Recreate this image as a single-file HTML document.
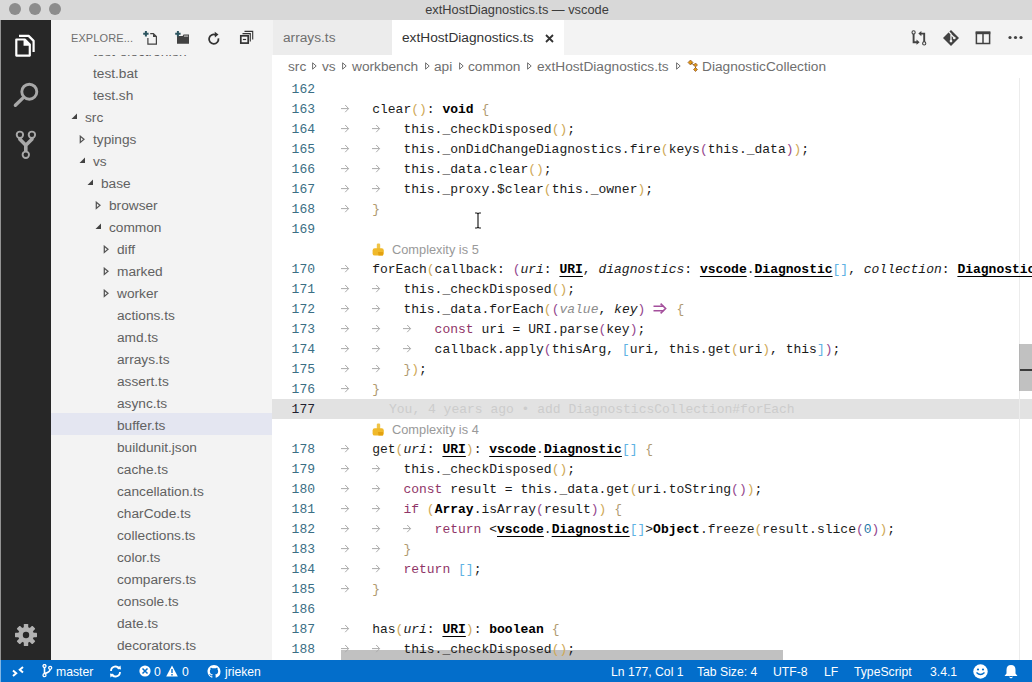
<!DOCTYPE html>
<html><head><meta charset="utf-8">
<style>
*{box-sizing:border-box;margin:0;padding:0}
html,body{width:1032px;height:682px;overflow:hidden;background:#fff;font-family:"Liberation Sans",sans-serif;font-size:13px}
.abs{position:absolute}
#title{left:0;top:0;width:1032px;height:20px;background:#d8d8d8;color:#3c3c3c;text-align:center;line-height:19px;font-size:12.8px;padding-left:2px}
.tl{position:absolute;top:3px;width:12px;height:12px;border-radius:50%;background:#8c8c8c}
#act{left:0;top:20px;width:51px;height:640px;background:#272727}
#side{left:51px;top:20px;width:221px;height:640px;background:#f3f3f3;overflow:hidden}
#sidehdr{left:0;top:0;width:221px;height:35px;background:#f3f3f3;z-index:2}
.row{position:absolute;left:0;width:221px;height:22px;line-height:22px;color:#616161;white-space:nowrap;font-size:13.7px}
.row.sel{background:#e4e6f1}
.tw{position:absolute}
#tabs{left:272px;top:20px;width:760px;height:35px;background:#f3f3f3}
.tab{position:absolute;top:0;height:35px;line-height:36px;white-space:nowrap;font-size:13.7px}
#crumbs{left:272px;top:55px;width:760px;height:23px;background:#fff;color:#6f6f6f;line-height:23px;white-space:nowrap;font-size:13.7px}
#crumbs span{position:absolute;top:0}
#crumbs svg{position:absolute;top:7px}
#editor{left:272px;top:78px;width:760px;height:582px;background:#fff;overflow:hidden}
.ln{position:absolute;left:0;width:43px;text-align:right;color:#3a6e84;font-family:"Liberation Mono",monospace;font-size:13px;height:20px;line-height:20px}
.ln.cur{color:#1f1f2f}
.cl{position:absolute;left:69px;width:700px;height:20px;line-height:20px;white-space:pre;font-family:"Liberation Mono",monospace;font-size:13px;color:#1a1a1a}
.cl>span,.cl>svg{position:absolute;top:0}
.cl>svg{top:-2px}
.ws{color:#b8b8b8}
.g{color:#cfa957}
.p{color:#95488e}
.b{color:#5eb2e3}
.t{color:#b09a70}
.k{color:#8f3568}
.bo{font-weight:bold;color:#000}
.bu{font-weight:bold;color:#000;text-decoration:underline;text-underline-offset:2.5px;text-decoration-thickness:1.4px}
.it{font-style:italic}
.itg{font-style:italic;color:#8c8c8c}
.ar2{display:inline-block;width:15.6px;height:20px;vertical-align:top;position:relative}
.ar2 svg{position:absolute;left:-0.5px;top:-2px}
.num{color:#1f7aa8}
.lens{position:absolute;left:100px;height:20px;line-height:22px;font-size:12.8px;color:#999;white-space:nowrap}
#status{left:0;top:660px;width:1032px;height:22px;background:#036ecb;color:#fff;line-height:22px;white-space:nowrap;font-size:12.2px}
#status span{position:absolute;top:1px}
#status svg{position:absolute}
</style></head>
<body>
<div id="title" class="abs">extHostDiagnostics.ts — vscode
  <div class="tl" style="left:9px"></div><div class="tl" style="left:29px"></div><div class="tl" style="left:49px"></div>
</div>
<div id="act" class="abs">
  <!-- files icon -->
  <svg class="abs" style="left:13px;top:12px" width="24" height="26" viewBox="0 0 24 26">
    <path d="M6 3.9 H15.6 L20.6 8.9 V20" fill="none" stroke="#fff" stroke-width="2.2" stroke-linejoin="round"/>
    <path d="M3.3 7.5 H11.8 L16.8 12.5 V23.6 H3.3 Z" fill="#272727" stroke="#fff" stroke-width="2.2" stroke-linejoin="round"/>
    <path d="M11.3 7.5 V13 H16.8" fill="#fff" stroke="#fff" stroke-width="1.5"/>
  </svg>
  <!-- search -->
  <svg class="abs" style="left:12px;top:60px" width="28" height="28" viewBox="0 0 28 28">
    <circle cx="17.3" cy="11.7" r="7.5" fill="none" stroke="#a8a8a8" stroke-width="2.9"/>
    <path d="M11.6 17.4 L3.4 25.3" stroke="#a8a8a8" stroke-width="3.4" stroke-linecap="round"/>
  </svg>
  <!-- scm -->
  <svg class="abs" style="left:11px;top:108px" width="28" height="32" viewBox="0 0 28 32">
    <path d="M8.9 9 V11.3 L14.8 17.2 V23.5 M20.9 9 V11.3 L14.8 17.2" fill="none" stroke="#a8a8a8" stroke-width="3.6" stroke-linejoin="round"/>
    <circle cx="8.9" cy="6.8" r="3.2" fill="#272727" stroke="#a8a8a8" stroke-width="1.9"/>
    <circle cx="20.9" cy="6.8" r="3.2" fill="#272727" stroke="#a8a8a8" stroke-width="1.9"/>
    <circle cx="14.8" cy="26.8" r="3.2" fill="#272727" stroke="#a8a8a8" stroke-width="1.9"/>
  </svg>
  <!-- gear -->
  <svg class="abs" style="left:13px;top:602px" width="26" height="26" viewBox="-13 -13 26 26">
    <g fill="#b2b2b2">
      <circle r="7.9"/>
      <rect x="-2.2" y="-11" width="4.4" height="22" rx="0.6"/>
      <rect x="-2.2" y="-11" width="4.4" height="22" rx="0.6" transform="rotate(45)"/>
      <rect x="-2.2" y="-11" width="4.4" height="22" rx="0.6" transform="rotate(90)"/>
      <rect x="-2.2" y="-11" width="4.4" height="22" rx="0.6" transform="rotate(135)"/>
    </g>
    <circle r="3.2" fill="#272727"/>
  </svg>
</div>
<div id="side" class="abs">
<div class="row" style="top:19px"><span style="position:absolute;top:2px;left:42px">test-electron.sh</span></div>
<div class="row" style="top:41px"><span style="position:absolute;top:2px;left:42px">test.bat</span></div>
<div class="row" style="top:63px"><span style="position:absolute;top:2px;left:42px">test.sh</span></div>
<div class="row" style="top:85px"><svg class="tw" style="left:20px;top:8px" width="7" height="7"><path d="M6 0.5 L6 6 L0.5 6 Z" fill="#424242"/></svg><span style="position:absolute;top:2px;left:34px">src</span></div>
<div class="row" style="top:107px"><svg class="tw" style="left:28px;top:8px" width="7" height="9"><path d="M1.3 1.2 L5 4.3 L1.3 7.4 Z" fill="none" stroke="#555" stroke-width="1.25"/></svg><span style="position:absolute;top:2px;left:42px">typings</span></div>
<div class="row" style="top:129px"><svg class="tw" style="left:28px;top:8px" width="7" height="7"><path d="M6 0.5 L6 6 L0.5 6 Z" fill="#424242"/></svg><span style="position:absolute;top:2px;left:42px">vs</span></div>
<div class="row" style="top:151px"><svg class="tw" style="left:36px;top:8px" width="7" height="7"><path d="M6 0.5 L6 6 L0.5 6 Z" fill="#424242"/></svg><span style="position:absolute;top:2px;left:50px">base</span></div>
<div class="row" style="top:173px"><svg class="tw" style="left:44px;top:8px" width="7" height="9"><path d="M1.3 1.2 L5 4.3 L1.3 7.4 Z" fill="none" stroke="#555" stroke-width="1.25"/></svg><span style="position:absolute;top:2px;left:58px">browser</span></div>
<div class="row" style="top:195px"><svg class="tw" style="left:44px;top:8px" width="7" height="7"><path d="M6 0.5 L6 6 L0.5 6 Z" fill="#424242"/></svg><span style="position:absolute;top:2px;left:58px">common</span></div>
<div class="row" style="top:217px"><svg class="tw" style="left:52px;top:8px" width="7" height="9"><path d="M1.3 1.2 L5 4.3 L1.3 7.4 Z" fill="none" stroke="#555" stroke-width="1.25"/></svg><span style="position:absolute;top:2px;left:66px">diff</span></div>
<div class="row" style="top:239px"><svg class="tw" style="left:52px;top:8px" width="7" height="9"><path d="M1.3 1.2 L5 4.3 L1.3 7.4 Z" fill="none" stroke="#555" stroke-width="1.25"/></svg><span style="position:absolute;top:2px;left:66px">marked</span></div>
<div class="row" style="top:261px"><svg class="tw" style="left:52px;top:8px" width="7" height="9"><path d="M1.3 1.2 L5 4.3 L1.3 7.4 Z" fill="none" stroke="#555" stroke-width="1.25"/></svg><span style="position:absolute;top:2px;left:66px">worker</span></div>
<div class="row" style="top:283px"><span style="position:absolute;top:2px;left:66px">actions.ts</span></div>
<div class="row" style="top:305px"><span style="position:absolute;top:2px;left:66px">amd.ts</span></div>
<div class="row" style="top:327px"><span style="position:absolute;top:2px;left:66px">arrays.ts</span></div>
<div class="row" style="top:349px"><span style="position:absolute;top:2px;left:66px">assert.ts</span></div>
<div class="row" style="top:371px"><span style="position:absolute;top:2px;left:66px">async.ts</span></div>
<div class="row sel" style="top:393px"><span style="position:absolute;top:2px;left:66px">buffer.ts</span></div>
<div class="row" style="top:415px"><span style="position:absolute;top:2px;left:66px">buildunit.json</span></div>
<div class="row" style="top:437px"><span style="position:absolute;top:2px;left:66px">cache.ts</span></div>
<div class="row" style="top:459px"><span style="position:absolute;top:2px;left:66px">cancellation.ts</span></div>
<div class="row" style="top:481px"><span style="position:absolute;top:2px;left:66px">charCode.ts</span></div>
<div class="row" style="top:503px"><span style="position:absolute;top:2px;left:66px">collections.ts</span></div>
<div class="row" style="top:525px"><span style="position:absolute;top:2px;left:66px">color.ts</span></div>
<div class="row" style="top:547px"><span style="position:absolute;top:2px;left:66px">comparers.ts</span></div>
<div class="row" style="top:569px"><span style="position:absolute;top:2px;left:66px">console.ts</span></div>
<div class="row" style="top:591px"><span style="position:absolute;top:2px;left:66px">date.ts</span></div>
<div class="row" style="top:613px"><span style="position:absolute;top:2px;left:66px">decorators.ts</span></div>
<div class="row" style="top:635px"><span style="position:absolute;top:2px;left:66px">diagnostics.ts</span></div>
  <div id="sidehdr" class="abs">
    <span style="position:absolute;left:20px;top:12px;font-size:11px;letter-spacing:0.1px;color:#6f6f6f">EXPLORE...</span>
    <!-- new file -->
    <svg class="abs" style="left:91px;top:10px" width="16" height="16" viewBox="0 0 16 16">
      <path d="M5.9 8 V14.2 H14.4 V6.6 L11.4 3.6 H8.2" fill="none" stroke="#424242" stroke-width="1.2"/>
      <path d="M11 3.4 V7 H14.6 Z" fill="#424242"/>
      <path d="M3.9 1.1 V6.5 M1.2 3.8 H6.6" stroke="#2d5560" stroke-width="2"/>
    </svg>
    <!-- new folder -->
    <svg class="abs" style="left:123px;top:10px" width="16" height="16" viewBox="0 0 16 16">
      <path d="M3 6 H8.6 L9.6 4.6 H15 V13.7 H3 Z" fill="#424242"/>
      <path d="M10 6.1 H14.2" stroke="#e6e6e6" stroke-width="0.9"/>
      <path d="M3.9 1.1 V6.5 M1.2 3.8 H6.6" stroke="#2d5560" stroke-width="2"/>
    </svg>
    <!-- refresh -->
    <svg class="abs" style="left:155px;top:10px" width="16" height="16" viewBox="0 0 16 16">
      <g transform="translate(0.1,0.8)">
      <path d="M12.3 7.6 A4.7 4.7 0 1 1 9.5 4" fill="none" stroke="#333" stroke-width="1.8"/>
      <path d="M8.6 1 L12.4 3.7 L8.8 6.6 Z" fill="#333"/>
      </g>
    </svg>
    <!-- collapse all -->
    <svg class="abs" style="left:188px;top:10px" width="16" height="16" viewBox="0 0 16 16">
      <path d="M5.5 1.4 H13.7 V9.5" fill="none" stroke="#333" stroke-width="1.1"/>
      <path d="M3.5 3.6 H11.3 V11.5" fill="none" stroke="#333" stroke-width="1.1"/>
      <rect x="1.8" y="5.8" width="7.4" height="7.3" fill="#f3f3f3" stroke="#333" stroke-width="1.7"/>
      <path d="M3.9 9.5 H7.1" stroke="#333" stroke-width="1.2"/>
    </svg>
  </div>
</div>
<div id="tabs" class="abs">
  <div class="tab" style="left:1px;width:119px;background:#ececec;color:#6f6f6f;padding-left:10px">arrays.ts</div>
  <div class="tab" style="left:120px;width:172px;background:#fff;color:#333;padding-left:10px">extHostDiagnostics.ts
    <svg style="position:absolute;left:153px;top:14px" width="9" height="9" viewBox="0 0 9 9"><path d="M1 1 L8 8 M8 1 L1 8" stroke="#333" stroke-width="1.8"/></svg>
  </div>
  <!-- right icons -->
  <svg class="abs" style="left:639px;top:10px" width="16" height="16" viewBox="0 0 16 16">
    <path d="M2.6 3.6 V12.2 H6.5" fill="none" stroke="#424242" stroke-width="1.9"/>
    <path d="M5.5 9.6 L8.6 12.2 L5.5 14.8 Z" fill="#424242"/>
    <path d="M13.2 12 V3.6 H9.4" fill="none" stroke="#424242" stroke-width="1.9"/>
    <path d="M10.4 1 L7.3 3.6 L10.4 6.2 Z" fill="#424242"/>
    <circle cx="2.6" cy="2.4" r="1.6" fill="#f3f3f3" stroke="#424242" stroke-width="1.1"/>
    <circle cx="13.2" cy="13.4" r="1.6" fill="#f3f3f3" stroke="#424242" stroke-width="1.1"/>
  </svg>
  <svg class="abs" style="left:670px;top:9px" width="18" height="18" viewBox="0 0 18 18">
    <path d="M9 1 L17 9 L9 17 L1 9 Z" fill="#424242"/>
    <path d="M6.4 2.4 L9 5 V12 M9 5.4 L12.2 8.8" stroke="#f3f3f3" stroke-width="1.3" fill="none"/>
    <circle cx="9" cy="12.1" r="1.35" fill="#f3f3f3"/><circle cx="12.3" cy="9" r="1.35" fill="#f3f3f3"/>
  </svg>
  <svg class="abs" style="left:703px;top:11px" width="16" height="14" viewBox="0 0 16 14">
    <rect x="1.4" y="1.3" width="13.2" height="11.2" fill="none" stroke="#424242" stroke-width="1.5"/>
    <rect x="0.7" y="0.6" width="14.6" height="2.6" fill="#424242"/>
    <path d="M8 1 V13" stroke="#424242" stroke-width="1.5"/>
  </svg>
  <svg class="abs" style="left:736px;top:15px" width="15" height="5" viewBox="0 0 15 5">
    <circle cx="2" cy="2.5" r="1.6" fill="#424242"/><circle cx="7.5" cy="2.5" r="1.6" fill="#424242"/><circle cx="13" cy="2.5" r="1.6" fill="#424242"/>
  </svg>
</div>
<div id="crumbs" class="abs">
  <span style="left:16px">src</span>
  <svg style="left:40px" width="5" height="8"><path d="M0.6 0.8 L4.2 4 L0.6 7.2 Z" fill="none" stroke="#6f6f6f" stroke-width="1"/></svg>
  <span style="left:50px">vs</span>
  <svg style="left:70px" width="5" height="8"><path d="M0.6 0.8 L4.2 4 L0.6 7.2 Z" fill="none" stroke="#6f6f6f" stroke-width="1"/></svg>
  <span style="left:80px">workbench</span>
  <svg style="left:153px" width="5" height="8"><path d="M0.6 0.8 L4.2 4 L0.6 7.2 Z" fill="none" stroke="#6f6f6f" stroke-width="1"/></svg>
  <span style="left:162px">api</span>
  <svg style="left:187px" width="5" height="8"><path d="M0.6 0.8 L4.2 4 L0.6 7.2 Z" fill="none" stroke="#6f6f6f" stroke-width="1"/></svg>
  <span style="left:196px">common</span>
  <svg style="left:255px" width="5" height="8"><path d="M0.6 0.8 L4.2 4 L0.6 7.2 Z" fill="none" stroke="#6f6f6f" stroke-width="1"/></svg>
  <span style="left:265px">extHostDiagnostics.ts</span>
  <svg style="left:404px" width="5" height="8"><path d="M0.6 0.8 L4.2 4 L0.6 7.2 Z" fill="none" stroke="#6f6f6f" stroke-width="1"/></svg>
  <svg style="left:415px;top:4px" width="13" height="13" viewBox="0 0 13 13">
    <path d="M1 3.5 L3.5 1 L6 3.5 L3.5 6 Z" fill="#e09a10" stroke="#7a3f2a" stroke-width="0.6"/>
    <path d="M6.5 6 L8.5 4 L10.5 6 L8.5 8 Z" fill="#e09a10" stroke="#7a3f2a" stroke-width="0.6"/>
    <path d="M6.5 10.5 L8.5 8.5 L10.5 10.5 L8.5 12.5 Z" fill="#e09a10" stroke="#7a3f2a" stroke-width="0.6"/>
    <path d="M4 4 L7 6 M8.5 8 V9" stroke="#7a4a10" stroke-width="0.8"/>
  </svg>
  <span style="left:430px">DiagnosticCollection</span>
</div>
<div id="editor" class="abs">
  <div class="abs" style="left:0;top:321px;width:760px;height:20px;background:#e2e2e2"></div>
  <div class="abs" style="left:117px;top:322px;height:20px;line-height:20px;font-family:'Liberation Mono',monospace;font-size:13px;color:#cccccc;white-space:pre">You, 4 years ago • add DiagnosticsCollection#forEach</div>
<div class="abs" style="left:747px;top:0;width:1px;height:582px;background:#ececec"></div>
<div class="abs" style="left:69px;top:572px;width:442px;height:10px;background:rgba(100,100,100,.4)"></div>
<div class="ln" style="top:2px">162</div>
<div class="cl" style="top:2px"><span class="ct" style="left:0.0px"></span></div>
<div class="ln" style="top:22px">163</div>
<div class="cl" style="top:22px"><svg class="ws" style="left:0.0px" width="9" height="20" viewBox="0 0 9 20"><path d="M0 10.6 H7.6 M4.2 7 L7.6 10.6 L4.2 14.2" fill="none" stroke="#ababab" stroke-width="1"/></svg><span class="ct" style="left:31.2px">clear<span class="g">()</span>: <span class="bo">void</span> <span class="t">{</span></span></div>
<div class="ln" style="top:42px">164</div>
<div class="cl" style="top:42px"><svg class="ws" style="left:0.0px" width="9" height="20" viewBox="0 0 9 20"><path d="M0 10.6 H7.6 M4.2 7 L7.6 10.6 L4.2 14.2" fill="none" stroke="#ababab" stroke-width="1"/></svg><svg class="ws" style="left:31.2px" width="9" height="20" viewBox="0 0 9 20"><path d="M0 10.6 H7.6 M4.2 7 L7.6 10.6 L4.2 14.2" fill="none" stroke="#ababab" stroke-width="1"/></svg><span class="ct" style="left:62.4px">this._checkDisposed<span class="g">()</span>;</span></div>
<div class="ln" style="top:62px">165</div>
<div class="cl" style="top:62px"><svg class="ws" style="left:0.0px" width="9" height="20" viewBox="0 0 9 20"><path d="M0 10.6 H7.6 M4.2 7 L7.6 10.6 L4.2 14.2" fill="none" stroke="#ababab" stroke-width="1"/></svg><svg class="ws" style="left:31.2px" width="9" height="20" viewBox="0 0 9 20"><path d="M0 10.6 H7.6 M4.2 7 L7.6 10.6 L4.2 14.2" fill="none" stroke="#ababab" stroke-width="1"/></svg><span class="ct" style="left:62.4px">this._onDidChangeDiagnostics.fire<span class="g">(</span>keys<span class="p">(</span>this._data<span class="p">)</span><span class="g">)</span>;</span></div>
<div class="ln" style="top:82px">166</div>
<div class="cl" style="top:82px"><svg class="ws" style="left:0.0px" width="9" height="20" viewBox="0 0 9 20"><path d="M0 10.6 H7.6 M4.2 7 L7.6 10.6 L4.2 14.2" fill="none" stroke="#ababab" stroke-width="1"/></svg><svg class="ws" style="left:31.2px" width="9" height="20" viewBox="0 0 9 20"><path d="M0 10.6 H7.6 M4.2 7 L7.6 10.6 L4.2 14.2" fill="none" stroke="#ababab" stroke-width="1"/></svg><span class="ct" style="left:62.4px">this._data.clear<span class="g">()</span>;</span></div>
<div class="ln" style="top:102px">167</div>
<div class="cl" style="top:102px"><svg class="ws" style="left:0.0px" width="9" height="20" viewBox="0 0 9 20"><path d="M0 10.6 H7.6 M4.2 7 L7.6 10.6 L4.2 14.2" fill="none" stroke="#ababab" stroke-width="1"/></svg><svg class="ws" style="left:31.2px" width="9" height="20" viewBox="0 0 9 20"><path d="M0 10.6 H7.6 M4.2 7 L7.6 10.6 L4.2 14.2" fill="none" stroke="#ababab" stroke-width="1"/></svg><span class="ct" style="left:62.4px">this._proxy.$clear<span class="g">(</span>this._owner<span class="g">)</span>;</span></div>
<div class="ln" style="top:122px">168</div>
<div class="cl" style="top:122px"><svg class="ws" style="left:0.0px" width="9" height="20" viewBox="0 0 9 20"><path d="M0 10.6 H7.6 M4.2 7 L7.6 10.6 L4.2 14.2" fill="none" stroke="#ababab" stroke-width="1"/></svg><span class="ct" style="left:31.2px"><span class="t">}</span></span></div>
<div class="ln" style="top:142px">169</div>
<div class="cl" style="top:142px"><span class="ct" style="left:0.0px"></span></div>
<div class="ln" style="top:182px">170</div>
<div class="cl" style="top:182px"><svg class="ws" style="left:0.0px" width="9" height="20" viewBox="0 0 9 20"><path d="M0 10.6 H7.6 M4.2 7 L7.6 10.6 L4.2 14.2" fill="none" stroke="#ababab" stroke-width="1"/></svg><span class="ct" style="left:31.2px">forEach<span class="g">(</span>callback: <span class="p">(</span><span class="it">uri</span>: <span class="bu">URI</span>, <span class="it">diagnostics</span>: <span class="bu">vscode</span>.<span class="bu">Diagnostic</span><span class="b">[]</span>, <span class="it">collection</span>: <span class="bu">DiagnosticCollection</span></span></div>
<div class="ln" style="top:202px">171</div>
<div class="cl" style="top:202px"><svg class="ws" style="left:0.0px" width="9" height="20" viewBox="0 0 9 20"><path d="M0 10.6 H7.6 M4.2 7 L7.6 10.6 L4.2 14.2" fill="none" stroke="#ababab" stroke-width="1"/></svg><svg class="ws" style="left:31.2px" width="9" height="20" viewBox="0 0 9 20"><path d="M0 10.6 H7.6 M4.2 7 L7.6 10.6 L4.2 14.2" fill="none" stroke="#ababab" stroke-width="1"/></svg><span class="ct" style="left:62.4px">this._checkDisposed<span class="g">()</span>;</span></div>
<div class="ln" style="top:222px">172</div>
<div class="cl" style="top:222px"><svg class="ws" style="left:0.0px" width="9" height="20" viewBox="0 0 9 20"><path d="M0 10.6 H7.6 M4.2 7 L7.6 10.6 L4.2 14.2" fill="none" stroke="#ababab" stroke-width="1"/></svg><svg class="ws" style="left:31.2px" width="9" height="20" viewBox="0 0 9 20"><path d="M0 10.6 H7.6 M4.2 7 L7.6 10.6 L4.2 14.2" fill="none" stroke="#ababab" stroke-width="1"/></svg><span class="ct" style="left:62.4px">this._data.forEach<span class="g">(</span><span class="p">(</span><span class="itg">value</span>, <span class="it">key</span><span class="p">)</span> <span class="ar2"><svg width="16" height="20" viewBox="0 0 16 20"><path d="M0.5 8.3 H10.5 M0.5 12.7 H10.5" stroke="#a44f9c" stroke-width="1.5"/><path d="M7.6 5.6 L12.6 10.5 L7.6 15.4" fill="none" stroke="#a44f9c" stroke-width="1.6"/></svg></span> <span class="t">{</span></span></div>
<div class="ln" style="top:242px">173</div>
<div class="cl" style="top:242px"><svg class="ws" style="left:0.0px" width="9" height="20" viewBox="0 0 9 20"><path d="M0 10.6 H7.6 M4.2 7 L7.6 10.6 L4.2 14.2" fill="none" stroke="#ababab" stroke-width="1"/></svg><svg class="ws" style="left:31.2px" width="9" height="20" viewBox="0 0 9 20"><path d="M0 10.6 H7.6 M4.2 7 L7.6 10.6 L4.2 14.2" fill="none" stroke="#ababab" stroke-width="1"/></svg><svg class="ws" style="left:62.4px" width="9" height="20" viewBox="0 0 9 20"><path d="M0 10.6 H7.6 M4.2 7 L7.6 10.6 L4.2 14.2" fill="none" stroke="#ababab" stroke-width="1"/></svg><span class="ct" style="left:93.6px"><span class="k">const</span> uri = URI.parse<span class="p">(</span>key<span class="p">)</span>;</span></div>
<div class="ln" style="top:262px">174</div>
<div class="cl" style="top:262px"><svg class="ws" style="left:0.0px" width="9" height="20" viewBox="0 0 9 20"><path d="M0 10.6 H7.6 M4.2 7 L7.6 10.6 L4.2 14.2" fill="none" stroke="#ababab" stroke-width="1"/></svg><svg class="ws" style="left:31.2px" width="9" height="20" viewBox="0 0 9 20"><path d="M0 10.6 H7.6 M4.2 7 L7.6 10.6 L4.2 14.2" fill="none" stroke="#ababab" stroke-width="1"/></svg><svg class="ws" style="left:62.4px" width="9" height="20" viewBox="0 0 9 20"><path d="M0 10.6 H7.6 M4.2 7 L7.6 10.6 L4.2 14.2" fill="none" stroke="#ababab" stroke-width="1"/></svg><span class="ct" style="left:93.6px">callback.apply<span class="p">(</span>thisArg, <span class="b">[</span>uri, this.get<span class="g">(</span>uri<span class="g">)</span>, this<span class="b">]</span><span class="p">)</span>;</span></div>
<div class="ln" style="top:282px">175</div>
<div class="cl" style="top:282px"><svg class="ws" style="left:0.0px" width="9" height="20" viewBox="0 0 9 20"><path d="M0 10.6 H7.6 M4.2 7 L7.6 10.6 L4.2 14.2" fill="none" stroke="#ababab" stroke-width="1"/></svg><svg class="ws" style="left:31.2px" width="9" height="20" viewBox="0 0 9 20"><path d="M0 10.6 H7.6 M4.2 7 L7.6 10.6 L4.2 14.2" fill="none" stroke="#ababab" stroke-width="1"/></svg><span class="ct" style="left:62.4px"><span class="t">}</span><span class="g">)</span>;</span></div>
<div class="ln" style="top:302px">176</div>
<div class="cl" style="top:302px"><svg class="ws" style="left:0.0px" width="9" height="20" viewBox="0 0 9 20"><path d="M0 10.6 H7.6 M4.2 7 L7.6 10.6 L4.2 14.2" fill="none" stroke="#ababab" stroke-width="1"/></svg><span class="ct" style="left:31.2px"><span class="t">}</span></span></div>
<div class="ln cur" style="top:322px">177</div>
<div class="cl" style="top:322px"><span class="ct" style="left:0.0px"></span></div>
<div class="ln" style="top:362px">178</div>
<div class="cl" style="top:362px"><svg class="ws" style="left:0.0px" width="9" height="20" viewBox="0 0 9 20"><path d="M0 10.6 H7.6 M4.2 7 L7.6 10.6 L4.2 14.2" fill="none" stroke="#ababab" stroke-width="1"/></svg><span class="ct" style="left:31.2px">get<span class="g">(</span><span class="it">uri</span>: <span class="bu">URI</span><span class="g">)</span>: <span class="bu">vscode</span>.<span class="bu">Diagnostic</span><span class="b">[]</span> <span class="t">{</span></span></div>
<div class="ln" style="top:382px">179</div>
<div class="cl" style="top:382px"><svg class="ws" style="left:0.0px" width="9" height="20" viewBox="0 0 9 20"><path d="M0 10.6 H7.6 M4.2 7 L7.6 10.6 L4.2 14.2" fill="none" stroke="#ababab" stroke-width="1"/></svg><svg class="ws" style="left:31.2px" width="9" height="20" viewBox="0 0 9 20"><path d="M0 10.6 H7.6 M4.2 7 L7.6 10.6 L4.2 14.2" fill="none" stroke="#ababab" stroke-width="1"/></svg><span class="ct" style="left:62.4px">this._checkDisposed<span class="g">()</span>;</span></div>
<div class="ln" style="top:402px">180</div>
<div class="cl" style="top:402px"><svg class="ws" style="left:0.0px" width="9" height="20" viewBox="0 0 9 20"><path d="M0 10.6 H7.6 M4.2 7 L7.6 10.6 L4.2 14.2" fill="none" stroke="#ababab" stroke-width="1"/></svg><svg class="ws" style="left:31.2px" width="9" height="20" viewBox="0 0 9 20"><path d="M0 10.6 H7.6 M4.2 7 L7.6 10.6 L4.2 14.2" fill="none" stroke="#ababab" stroke-width="1"/></svg><span class="ct" style="left:62.4px"><span class="k">const</span> result = this._data.get<span class="g">(</span>uri.toString<span class="p">()</span><span class="g">)</span>;</span></div>
<div class="ln" style="top:422px">181</div>
<div class="cl" style="top:422px"><svg class="ws" style="left:0.0px" width="9" height="20" viewBox="0 0 9 20"><path d="M0 10.6 H7.6 M4.2 7 L7.6 10.6 L4.2 14.2" fill="none" stroke="#ababab" stroke-width="1"/></svg><svg class="ws" style="left:31.2px" width="9" height="20" viewBox="0 0 9 20"><path d="M0 10.6 H7.6 M4.2 7 L7.6 10.6 L4.2 14.2" fill="none" stroke="#ababab" stroke-width="1"/></svg><span class="ct" style="left:62.4px"><span class="k">if</span> <span class="g">(</span><span class="bo">Array</span>.isArray<span class="p">(</span>result<span class="p">)</span><span class="g">)</span> <span class="t">{</span></span></div>
<div class="ln" style="top:442px">182</div>
<div class="cl" style="top:442px"><svg class="ws" style="left:0.0px" width="9" height="20" viewBox="0 0 9 20"><path d="M0 10.6 H7.6 M4.2 7 L7.6 10.6 L4.2 14.2" fill="none" stroke="#ababab" stroke-width="1"/></svg><svg class="ws" style="left:31.2px" width="9" height="20" viewBox="0 0 9 20"><path d="M0 10.6 H7.6 M4.2 7 L7.6 10.6 L4.2 14.2" fill="none" stroke="#ababab" stroke-width="1"/></svg><svg class="ws" style="left:62.4px" width="9" height="20" viewBox="0 0 9 20"><path d="M0 10.6 H7.6 M4.2 7 L7.6 10.6 L4.2 14.2" fill="none" stroke="#ababab" stroke-width="1"/></svg><span class="ct" style="left:93.6px"><span class="k">return</span> &lt;<span class="bu">vscode</span>.<span class="bu">Diagnostic</span><span class="b">[]</span>&gt;<span class="bo">Object</span>.freeze<span class="g">(</span>result.slice<span class="p">(</span><span class="num">0</span><span class="p">)</span><span class="g">)</span>;</span></div>
<div class="ln" style="top:462px">183</div>
<div class="cl" style="top:462px"><svg class="ws" style="left:0.0px" width="9" height="20" viewBox="0 0 9 20"><path d="M0 10.6 H7.6 M4.2 7 L7.6 10.6 L4.2 14.2" fill="none" stroke="#ababab" stroke-width="1"/></svg><svg class="ws" style="left:31.2px" width="9" height="20" viewBox="0 0 9 20"><path d="M0 10.6 H7.6 M4.2 7 L7.6 10.6 L4.2 14.2" fill="none" stroke="#ababab" stroke-width="1"/></svg><span class="ct" style="left:62.4px"><span class="t">}</span></span></div>
<div class="ln" style="top:482px">184</div>
<div class="cl" style="top:482px"><svg class="ws" style="left:0.0px" width="9" height="20" viewBox="0 0 9 20"><path d="M0 10.6 H7.6 M4.2 7 L7.6 10.6 L4.2 14.2" fill="none" stroke="#ababab" stroke-width="1"/></svg><svg class="ws" style="left:31.2px" width="9" height="20" viewBox="0 0 9 20"><path d="M0 10.6 H7.6 M4.2 7 L7.6 10.6 L4.2 14.2" fill="none" stroke="#ababab" stroke-width="1"/></svg><span class="ct" style="left:62.4px"><span class="k">return</span> <span class="b">[]</span>;</span></div>
<div class="ln" style="top:502px">185</div>
<div class="cl" style="top:502px"><svg class="ws" style="left:0.0px" width="9" height="20" viewBox="0 0 9 20"><path d="M0 10.6 H7.6 M4.2 7 L7.6 10.6 L4.2 14.2" fill="none" stroke="#ababab" stroke-width="1"/></svg><span class="ct" style="left:31.2px"><span class="t">}</span></span></div>
<div class="ln" style="top:522px">186</div>
<div class="cl" style="top:522px"><span class="ct" style="left:0.0px"></span></div>
<div class="ln" style="top:542px">187</div>
<div class="cl" style="top:542px"><svg class="ws" style="left:0.0px" width="9" height="20" viewBox="0 0 9 20"><path d="M0 10.6 H7.6 M4.2 7 L7.6 10.6 L4.2 14.2" fill="none" stroke="#ababab" stroke-width="1"/></svg><span class="ct" style="left:31.2px">has<span class="g">(</span><span class="it">uri</span>: <span class="bu">URI</span><span class="g">)</span>: <span class="bo">boolean</span> <span class="t">{</span></span></div>
<div class="ln" style="top:562px">188</div>
<div class="cl" style="top:562px"><svg class="ws" style="left:0.0px" width="9" height="20" viewBox="0 0 9 20"><path d="M0 10.6 H7.6 M4.2 7 L7.6 10.6 L4.2 14.2" fill="none" stroke="#ababab" stroke-width="1"/></svg><svg class="ws" style="left:31.2px" width="9" height="20" viewBox="0 0 9 20"><path d="M0 10.6 H7.6 M4.2 7 L7.6 10.6 L4.2 14.2" fill="none" stroke="#ababab" stroke-width="1"/></svg><span class="ct" style="left:62.4px">this._checkDisposed<span class="g">()</span>;</span></div>
  <div class="lens" style="top:161px;left:100px">
    <svg style="position:absolute;left:0;top:4px" width="13" height="13" viewBox="0 0 13 13"><rect x="4.8" y="0.6" width="3.4" height="7" rx="1.2" fill="#eec449"/><rect x="0.6" y="5.2" width="11.2" height="7.4" rx="2.2" fill="#f0b92a"/><path d="M6 9 H11 V12.4 H6.5 Z" fill="#e3a110"/></svg>
    <span style="position:absolute;left:20px">Complexity is 5</span>
  </div>
  <div class="lens" style="top:341px;left:100px">
    <svg style="position:absolute;left:0;top:4px" width="13" height="13" viewBox="0 0 13 13"><rect x="4.8" y="0.6" width="3.4" height="7" rx="1.2" fill="#eec449"/><rect x="0.6" y="5.2" width="11.2" height="7.4" rx="2.2" fill="#f0b92a"/><path d="M6 9 H11 V12.4 H6.5 Z" fill="#e3a110"/></svg>
    <span style="position:absolute;left:20px">Complexity is 4</span>
  </div>
  <!-- overview ruler -->
  <div class="abs" style="left:747px;top:266px;width:13px;height:47px;background:rgba(100,100,100,.4)"></div>
  <div class="abs" style="left:748px;top:291px;width:12px;height:2px;background:#3a3a3a"></div>
  <!-- horizontal scrollbar -->
  <!-- cursor I-beam -->
  <svg class="abs" style="left:202px;top:134px" width="8" height="17" viewBox="0 0 8 17"><path d="M1 1 H3 L4 2 L5 1 H7 M4 2 V15 M1 16 H3 L4 15 L5 16 H7" stroke="#222" stroke-width="1.2" fill="none"/></svg>
</div>
<div id="status" class="abs">
  <svg style="left:12px;top:6px" width="12" height="11" viewBox="0 0 12 11"><path d="M1 4.5 L4.2 7.2 L1 9.9 M11 1 L7.8 3.7 L11 6.4" fill="none" stroke="#fff" stroke-width="2"/></svg>
  <svg style="left:42px;top:4px" width="11" height="14" viewBox="0 0 11 14"><path d="M2.5 3.5 V10.5 M8.2 5 Q8.2 8.2 2.5 9.6" fill="none" stroke="#fff" stroke-width="1.6"/><circle cx="2.5" cy="2" r="1.5" fill="#036ecb" stroke="#fff" stroke-width="1.3"/><circle cx="8.2" cy="3.8" r="1.5" fill="#036ecb" stroke="#fff" stroke-width="1.3"/><circle cx="2.5" cy="11.2" r="1.5" fill="#036ecb" stroke="#fff" stroke-width="1.3"/></svg>
  <span style="left:56px">master</span>
  <svg style="left:109px;top:5px" width="13" height="13" viewBox="0 0 13 13"><path d="M2 6 A4.5 4.5 0 0 1 10.5 4 M11 7 A4.5 4.5 0 0 1 2.5 9" fill="none" stroke="#fff" stroke-width="1.8"/><path d="M8 3.5 L12 4.5 L11.5 0.5 Z M5 9.5 L1 8.5 L1.5 12.5 Z" fill="#fff"/></svg>
  <svg style="left:139px;top:5px" width="12" height="12" viewBox="0 0 12 12"><circle cx="6" cy="6" r="5.6" fill="#fff"/><path d="M3.5 3.5 L8.5 8.5 M8.5 3.5 L3.5 8.5" stroke="#036ecb" stroke-width="1.5"/></svg>
  <span style="left:154px">0</span>
  <svg style="left:166px;top:5px" width="12" height="12" viewBox="0 0 12 12"><path d="M6 0.5 L11.8 11.5 H0.2 Z" fill="#fff"/><path d="M6 4 V8 M6 9 V10.5" stroke="#036ecb" stroke-width="1.4"/></svg>
  <span style="left:182px">0</span>
  <svg style="left:207px;top:5px" width="14" height="13" viewBox="0 0 16 16"><path fill="#fff" d="M8 0C3.58 0 0 3.58 0 8c0 3.54 2.29 6.53 5.47 7.59.4.07.55-.17.55-.38 0-.19-.01-.82-.01-1.49-2.01.37-2.53-.49-2.69-.94-.09-.23-.48-.94-.82-1.13-.28-.15-.68-.52-.01-.53.63-.01 1.08.58 1.23.82.72 1.21 1.87.87 2.33.66.07-.52.28-.87.51-1.07-1.78-.2-3.64-.89-3.64-3.95 0-.87.31-1.59.82-2.15-.08-.2-.36-1.02.08-2.12 0 0 .67-.21 2.2.82.64-.18 1.32-.27 2-.27.68 0 1.36.09 2 .27 1.53-1.04 2.2-.82 2.2-.82.44 1.1.16 1.92.08 2.12.51.56.82 1.27.82 2.15 0 3.07-1.87 3.75-3.65 3.95.29.25.54.73.54 1.48 0 1.07-.01 1.93-.01 2.2 0 .21.15.46.55.38A8.013 8.013 0 0016 8c0-4.42-3.58-8-8-8z"/></svg>
  <span style="left:225px">jrieken</span>
  <span style="left:611px">Ln 177, Col 1</span>
  <span style="left:697px">Tab Size: 4</span>
  <span style="left:773px">UTF-8</span>
  <span style="left:824px">LF</span>
  <span style="left:854px">TypeScript</span>
  <span style="left:930px">3.4.1</span>
  <svg style="left:973px;top:4px" width="15" height="15" viewBox="0 0 15 15"><circle cx="7.5" cy="7.5" r="7.2" fill="#fff"/><circle cx="5" cy="5.5" r="1.1" fill="#036ecb"/><circle cx="10" cy="5.5" r="1.1" fill="#036ecb"/><path d="M3.5 8.5 Q7.5 12.5 11.5 8.5" fill="none" stroke="#036ecb" stroke-width="1.3"/></svg>
  <svg style="left:1004px;top:4px" width="14" height="15" viewBox="0 0 14 15"><path d="M7 1 Q11.5 1 11.5 6 V9.5 L13.5 12 H0.5 L2.5 9.5 V6 Q2.5 1 7 1 Z" fill="#fff"/><path d="M5.5 13 Q7 15 8.5 13" fill="#fff" stroke="#fff"/></svg>
</div>
<div class="abs" style="left:0;top:20px;width:1px;height:662px;background:rgba(255,255,255,.5);z-index:9"></div>
</body></html>
